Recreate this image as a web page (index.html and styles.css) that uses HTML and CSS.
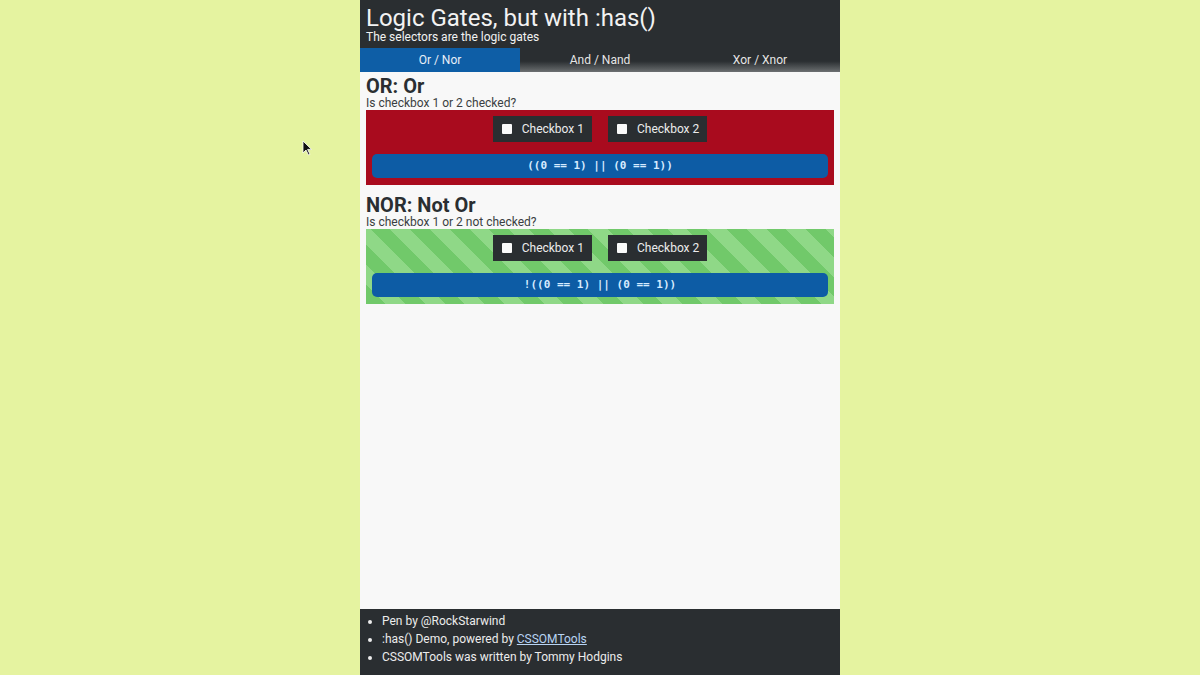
FILE: index.html
```html
<!DOCTYPE html>
<html>
<head>
<meta charset="utf-8">
<link rel="stylesheet" href="styles.css">
</head>
<body>
<svg class="cursor" width="10" height="16" viewBox="0 0 10 16"><path d="M1 1 L1 13 L4 10 L6.5 15 L8 14.3 L5.6 9.4 L9.5 9.4 Z" fill="#111" stroke="#fff" stroke-width="0.8"/></svg>
<div class="app">
  <header class="header">
    <h1 class="title">Logic Gates, but with :has()</h1>
    <p class="subtitle">The selectors are the logic gates</p>
    <nav class="tabs">
      <div class="tab active">Or / Nor</div>
      <div class="tab">And / Nand</div>
      <div class="tab">Xor / Xnor</div>
    </nav>
  </header>
  <main class="content">
    <section class="gate">
      <h2 class="gate-title">OR: Or</h2>
      <p class="gate-q">Is checkbox 1 or 2 checked?</p>
      <div class="box red">
        <div class="checks">
          <label class="check"><span class="sq"></span>Checkbox 1</label>
          <label class="check"><span class="sq"></span>Checkbox 2</label>
        </div>
        <div class="expr">((0 == 1) || (0 == 1))</div>
      </div>
    </section>
    <section class="gate">
      <h2 class="gate-title">NOR: Not Or</h2>
      <p class="gate-q">Is checkbox 1 or 2 not checked?</p>
      <div class="box green">
        <div class="checks">
          <label class="check"><span class="sq"></span>Checkbox 1</label>
          <label class="check"><span class="sq"></span>Checkbox 2</label>
        </div>
        <div class="expr">!((0 == 1) || (0 == 1))</div>
      </div>
    </section>
  </main>
  <footer class="footer">
    <ul class="credits">
      <li>Pen by @RockStarwind</li>
      <li>:has() Demo, powered by <a href="#" class="link">CSSOMTools</a></li>
      <li>CSSOMTools was written by Tommy Hodgins</li>
    </ul>
  </footer>
</div>
</body>
</html>
```
FILE: styles.css
```css
* { box-sizing: border-box; }
html, body { margin: 0; padding: 0; }
body {
  background: #e5f3a0;
  font-family: Roboto, "Liberation Sans", sans-serif;
  height: 675px;
  overflow: hidden;
}
.cursor { position: absolute; left: 302px; top: 140px; }
.app {
  width: 480px;
  height: 675px;
  margin: 0 auto;
  background: #f8f8f8;
  display: flex;
  flex-direction: column;
}
.header {
  background: #2a2e31;
  color: #f2f2f2;
}
.title {
  margin: 0;
  padding: 5px 6px 0;
  font-size: 24px;
  font-weight: 400;
  line-height: 26px;
}
.subtitle {
  margin: 0;
  padding: 0 6px;
  font-size: 12px;
  line-height: 12px;
  height: 17px;
}
.tabs { display: flex; height: 24px; }
.tab {
  flex: 1;
  text-align: center;
  font-size: 12px;
  line-height: 24px;
  color: #e6e6e6;
  background: linear-gradient(to bottom, #2a2e31 55%, #55595b 85%, #6d7072);
}
.tab.active { background: #0e5ea6; color: #e8f0f8; }
.content { flex: 1; padding: 4px 6px 0; }
.gate { margin-bottom: 10px; }
.gate-title {
  margin: 0;
  font-size: 20px;
  font-weight: 700;
  line-height: 21px;
  color: #2a2e31;
}
.gate-q {
  margin: 0;
  font-size: 12px;
  line-height: 13px;
  color: #3a3e41;
}
.box {
  padding: 6px 6px 7px;
  display: flex;
  flex-direction: column;
  gap: 12px;
}
.box.red { background: #a90b1e; }
.box.green {
  background: repeating-linear-gradient(45deg, #71c96a 0 14px, #8fd887 14px 28px);
}
.checks { display: flex; justify-content: center; gap: 16px; height: 26px; }
.check {
  display: flex;
  align-items: center;
  gap: 10px;
  padding: 0 8px 0 9px;
  background: #2a2e31;
  color: #ececec;
  font-size: 12px;
}
.sq { width: 10px; height: 10px; background: #fafafa; border-radius: 1px; }
.expr {
  height: 24px;
  line-height: 24px;
  background: #0d5ca5;
  border-radius: 5px;
  text-align: center;
  font-family: "DejaVu Sans Mono", monospace;
  font-size: 11px;
  font-weight: 600;
  color: #d6ebff;
}
.footer { background: #2a2e31; height: 66px; color: #ececec; }
.credits {
  margin: 0;
  padding: 3px 0 0 22px;
  font-size: 12px;
  line-height: 18px;
}
.link { color: #b8d4f4; }
```
